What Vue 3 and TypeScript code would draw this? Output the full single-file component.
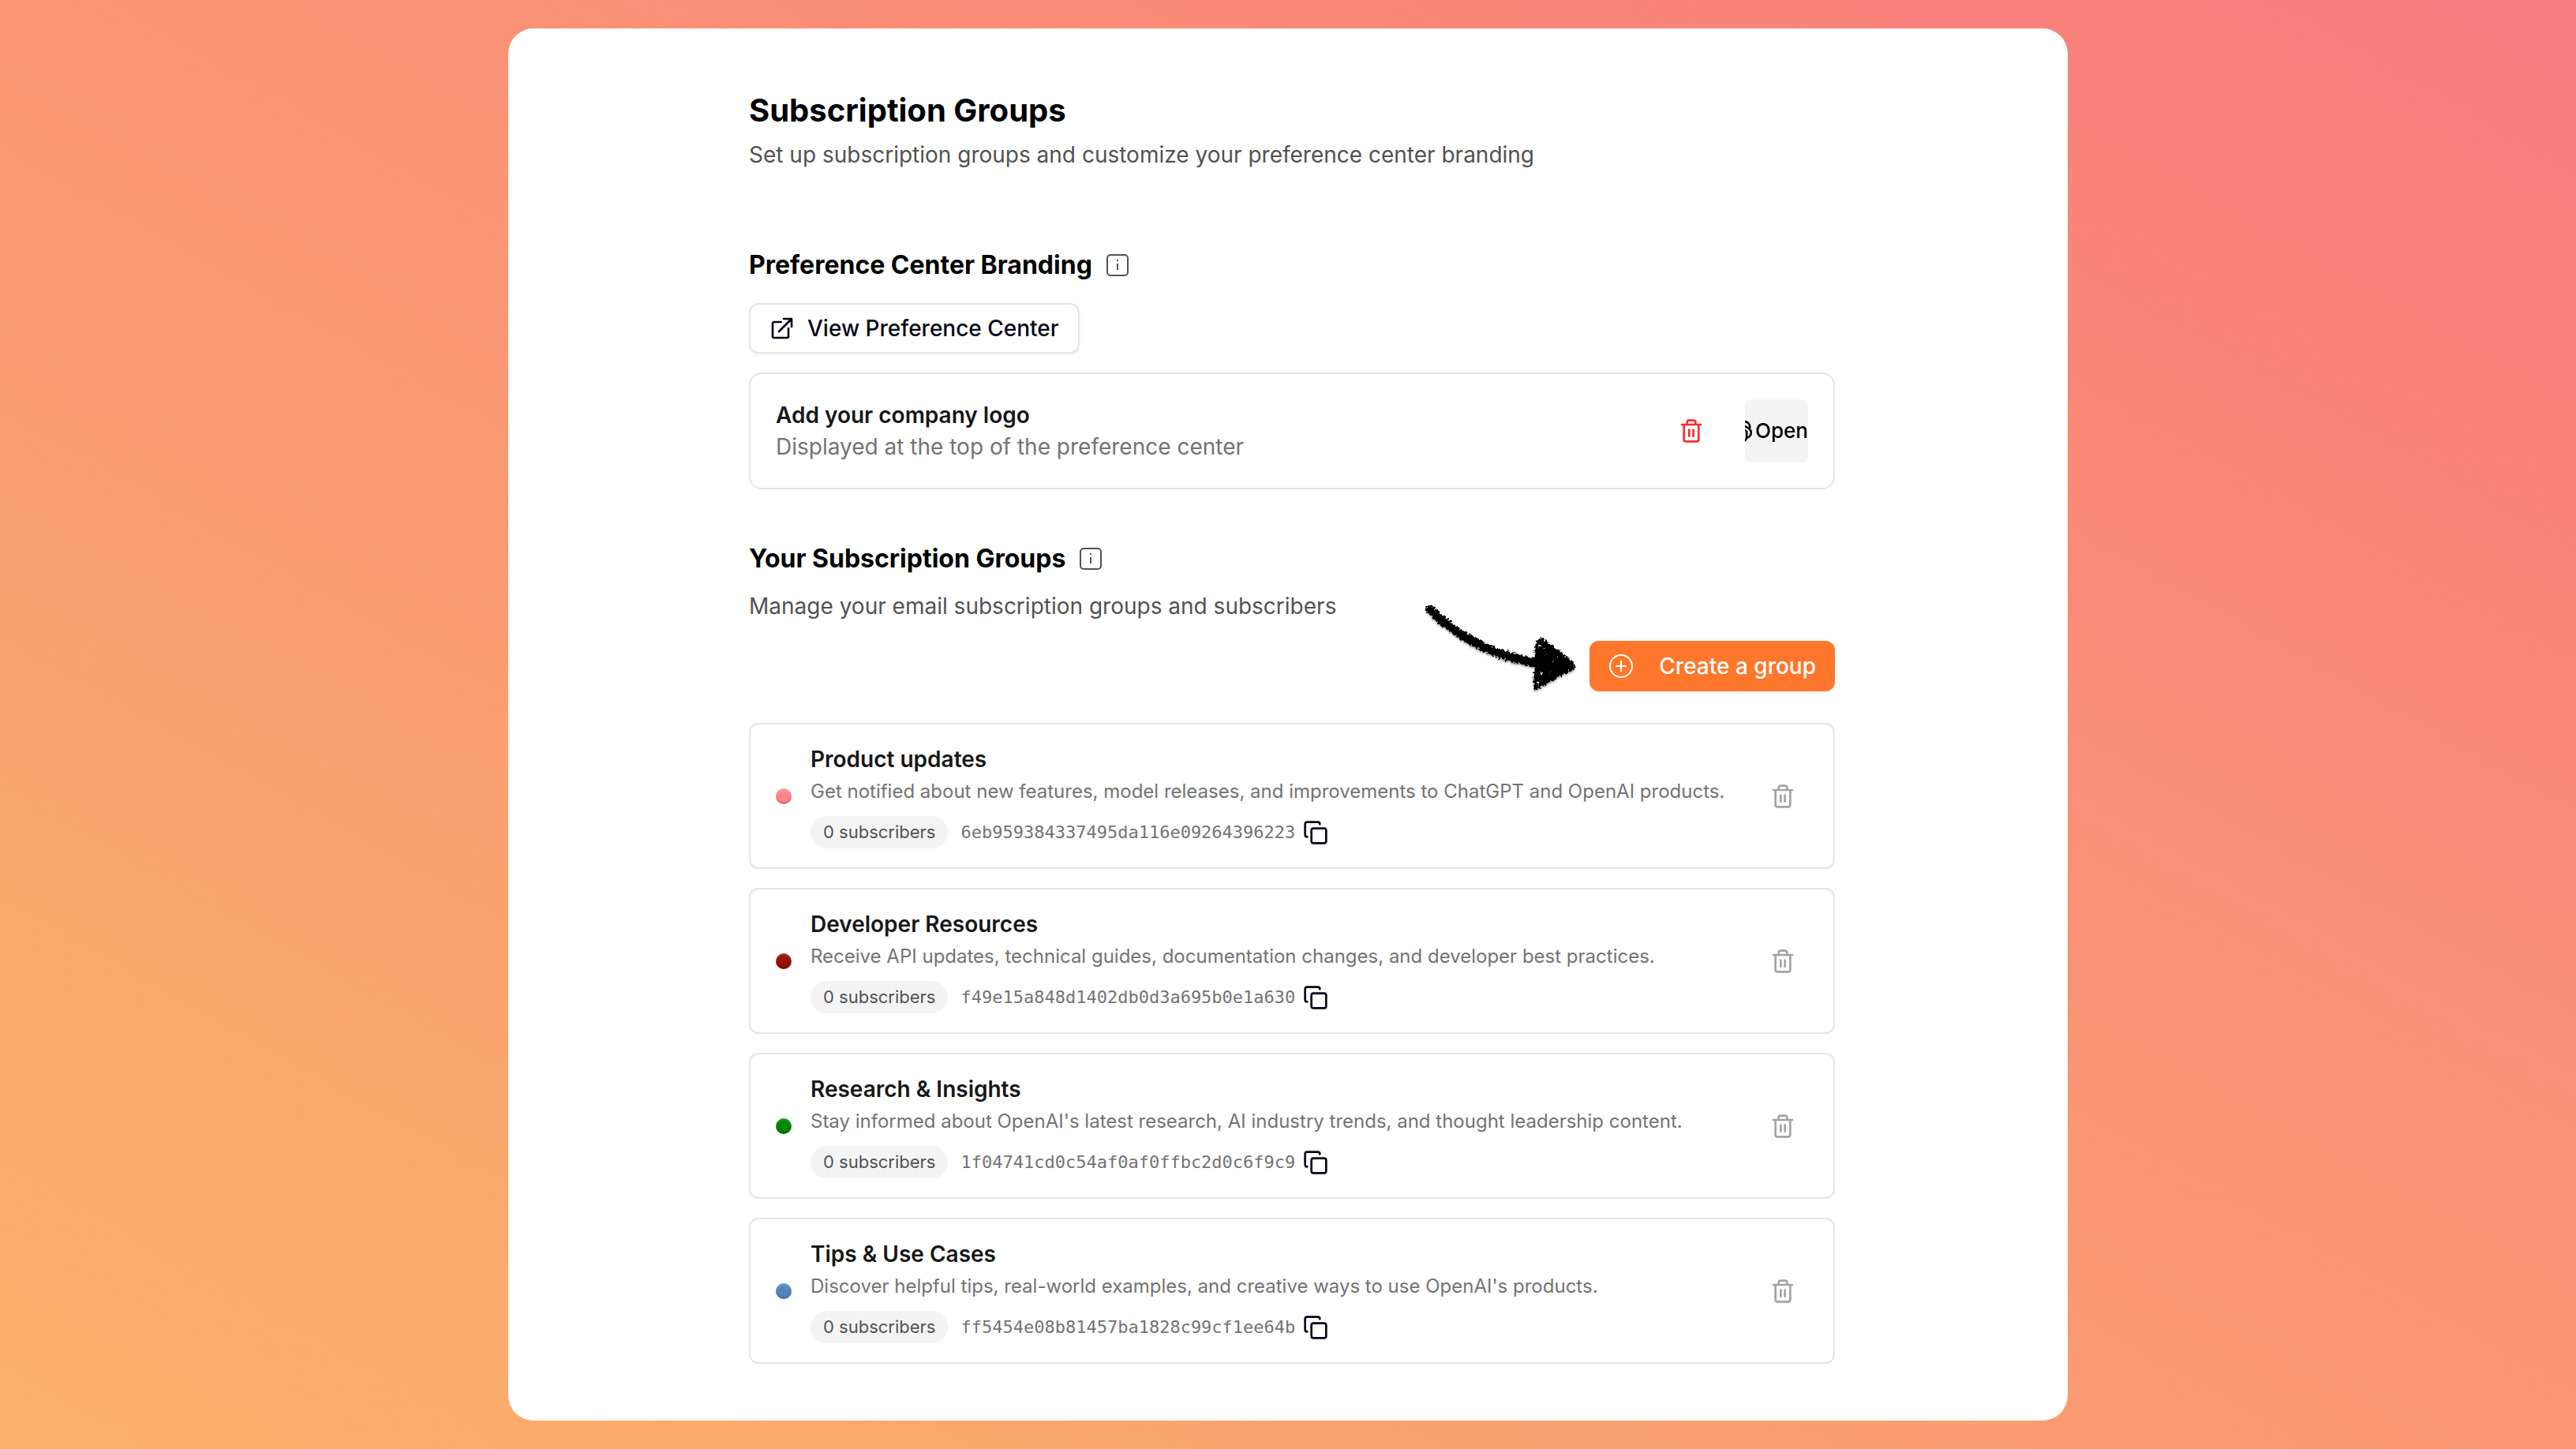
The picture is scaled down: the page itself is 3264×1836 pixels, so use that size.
<script setup lang="ts">
interface Group {
  name: string
  description: string
  subscribers: number
  id: string
  color: string
}

const groups: Group[] = [
  {
    name: 'Product updates',
    description:
      'Get notified about new features, model releases, and improvements to ChatGPT and OpenAI products.',
    subscribers: 0,
    id: '6eb959384337495da116e09264396223',
    color: '#ff858d',
  },
  {
    name: 'Developer Resources',
    description:
      'Receive API updates, technical guides, documentation changes, and developer best practices.',
    subscribers: 0,
    id: 'f49e15a848d1402db0d3a695b0e1a630',
    color: '#941100',
  },
  {
    name: 'Research & Insights',
    description:
      "Stay informed about OpenAI's latest research, AI industry trends, and thought leadership content.",
    subscribers: 0,
    id: '1f04741cd0c54af0af0ffbc2d0c6f9c9',
    color: '#008500',
  },
  {
    name: 'Tips & Use Cases',
    description:
      "Discover helpful tips, real-world examples, and creative ways to use OpenAI's products.",
    subscribers: 0,
    id: 'ff5454e08b81457ba1828c99cf1ee64b',
    color: '#5186be',
  },
]

const copyId = (id: string): void => {
  void navigator.clipboard?.writeText(id)
}
</script>

<template>
  <div class="page">
    <main class="panel">
      <header class="intro">
        <h1>Subscription Groups</h1>
        <p class="lead">Set up subscription groups and customize your preference center branding</p>
      </header>

      <section class="branding">
        <div class="heading">
          <h2>Preference Center Branding</h2>
          <svg class="info" viewBox="0 0 28 28" aria-hidden="true">
            <rect x="1" y="1" width="26" height="26" rx="4" />
            <path d="M14 12v8M14 7v2" />
          </svg>
        </div>
        <a class="view" href="#preference-center">
          <svg class="icon" viewBox="0 0 24 24" aria-hidden="true">
            <path d="M13.5 3H21v7.5M21 3 9 15M18 12v7.5a1.5 1.5 0 0 1-1.5 1.5h-12A1.500 1.500 0 0 1 3 19.500v-12A1.500 1.500 0 0 1 4.500 6H11" />
          </svg>
          View Preference Center
        </a>
        <div class="logo-card">
          <div class="logo-text">
            <h3>Add your company logo</h3>
            <p>Displayed at the top of the preference center</p>
          </div>
          <button class="delete danger" type="button" aria-label="Remove logo">
            <svg class="icon" viewBox="0 0 24 24" aria-hidden="true">
              <path d="M3 6h18M19 6v14a2 2 0 0 1-2 2H7a2 2 0 0 1-2-2V6M8 6V4a2 2 0 0 1 2-2h4a2 2 0 0 1 2 2v2M10 11v6M14 11v6" />
            </svg>
          </button>
          <div class="thumb">
            <svg viewBox="0 0 24 24" aria-hidden="true">
              <path d="M22.2819 9.8211a5.9847 5.9847 0 0 0-.5157-4.9108 6.0462 6.0462 0 0 0-6.5098-2.9A6.0651 6.0651 0 0 0 4.9807 4.1818a5.9847 5.9847 0 0 0-3.9977 2.9 6.0462 6.0462 0 0 0 .7427 7.0966 5.98 5.98 0 0 0 .511 4.9107 6.051 6.051 0 0 0 6.5146 2.9001A5.9847 5.9847 0 0 0 13.2599 24a6.0557 6.0557 0 0 0 5.7718-4.2058 5.9894 5.9894 0 0 0 3.9977-2.9001 6.0557 6.0557 0 0 0-.7475-7.0729zm-9.022 12.6081a4.4755 4.4755 0 0 1-2.8764-1.0408l.1419-.0804 4.7783-2.7582a.7948.7948 0 0 0 .3927-.6813v-6.7369l2.02 1.1686a.071.071 0 0 1 .038.052v5.5826a4.504 4.504 0 0 1-4.4945 4.4944zm-9.6607-4.1254a4.4708 4.4708 0 0 1-.5346-3.0137l.142.0852 4.783 2.7582a.7712.7712 0 0 0 .7806 0l5.8428-3.3685v2.3324a.0804.0804 0 0 1-.0332.0615L9.74 19.9502a4.4992 4.4992 0 0 1-6.1408-1.6464zM2.3408 7.8956a4.485 4.485 0 0 1 2.3655-1.9728V11.6a.7664.7664 0 0 0 .3879.6765l5.8144 3.3543-2.0201 1.1685a.0757.0757 0 0 1-.071 0l-4.8303-2.7865A4.504 4.504 0 0 1 2.3408 7.872zm16.5963 3.8558L13.1038 8.364 15.1192 7.2a.0757.0757 0 0 1 .071 0l4.8303 2.7913a4.4944 4.4944 0 0 1-.6765 8.1042v-5.6772a.79.79 0 0 0-.407-.667zm2.0107-3.0231l-.142-.0852-4.7735-2.7818a.7759.7759 0 0 0-.7854 0L9.409 9.2297V6.8974a.0662.0662 0 0 1 .0284-.0615l4.8303-2.7866a4.4992 4.4992 0 0 1 6.6802 4.66zM8.3065 12.863l-2.02-1.1638a.0804.0804 0 0 1-.038-.0567V6.0742a4.4992 4.4992 0 0 1 7.3757-3.4537l-.142.0805L8.704 5.459a.7948.7948 0 0 0-.3927.6813zm1.0976-2.3654l2.602-1.4998 2.6069 1.4998v2.9994l-2.5974 1.4997-2.6067-1.4997Z" />
            </svg>
            <span>Open</span>
          </div>
        </div>
      </section>

      <section class="groups">
        <div class="heading">
          <h2>Your Subscription Groups</h2>
          <svg class="info" viewBox="0 0 28 28" aria-hidden="true">
            <rect x="1" y="1" width="26" height="26" rx="4" />
            <path d="M14 12v8M14 7v2" />
          </svg>
        </div>
        <p class="lead manage">Manage your email subscription groups and subscribers</p>
        <div class="actions">
          <svg class="arrow" viewBox="0 0 200 120" aria-hidden="true">
            <defs>
              <filter id="chalk" x="-5%" y="-5%" width="110%" height="115%">
                <feTurbulence type="fractalNoise" baseFrequency="0.35" numOctaves="2" seed="4" result="noise" />
                <feDisplacementMap in="SourceGraphic" in2="noise" scale="8" xChannelSelector="R" yChannelSelector="G" result="rough" />
                <feDropShadow in="rough" dx="0" dy="2" stdDeviation="1" flood-color="#000" flood-opacity="0.35" />
              </filter>
            </defs>
            <g filter="url(#chalk)">
              <path class="shaft" d="M11 12C38 40 84 70 142 79" />
              <path class="head" d="M148 51 152 49 192 79 194 86 150 110 144 114 143 104 145 84 144 62Z" />
              <path class="fleck" d="M149 57l1 5M157 70l1 2M166 78l2-1M152 91l-1 4M163 93l2 1M175 84l1 1M148 103l1 4M156 60l1 1M172 72l1 1" />
            </g>
          </svg>
          <button class="create" type="button">
            <svg class="icon" viewBox="0 0 32 32" aria-hidden="true">
              <circle cx="16" cy="16" r="14" />
              <path d="M10 16h12M16 10v12" />
            </svg>
            Create a group
          </button>
        </div>

        <ul class="list">
          <li v-for="group in groups" :key="group.id" class="group">
            <span class="dot" :style="{ backgroundColor: group.color }"></span>
            <div class="body">
              <h3>{{ group.name }}</h3>
              <p class="description">{{ group.description }}</p>
              <div class="meta">
                <span class="badge">{{ group.subscribers }} subscribers</span>
                <code>{{ group.id }}</code>
                <button class="copy" type="button" aria-label="Copy group ID" @click="copyId(group.id)">
                  <svg class="icon" viewBox="0 0 24 24" aria-hidden="true">
                    <rect x="8" y="8" width="14" height="14" rx="2" />
                    <path d="M4 16c-1.100 0-2-.9-2-2V4c0-1.100.9-2 2-2h10c1.100 0 2 .9 2 2" />
                  </svg>
                </button>
              </div>
            </div>
            <button class="delete" type="button" aria-label="Delete group">
              <svg class="icon" viewBox="0 0 24 24" aria-hidden="true">
                <path d="M3 6h18M19 6v14a2 2 0 0 1-2 2H7a2 2 0 0 1-2-2V6M8 6V4a2 2 0 0 1 2-2h4a2 2 0 0 1 2 2v2M10 11v6M14 11v6" />
              </svg>
            </button>
          </li>
        </ul>
      </section>
    </main>
  </div>
</template>

<style>
body {
  margin: 0;
}
</style>

<style scoped>
* {
  box-sizing: border-box;
}

.page {
  display: flex;
  justify-content: center;
  align-items: flex-start;
  min-height: 100vh;
  padding: 36px;
  background: linear-gradient(to top right, #fab26a, #f87b7e);
  font-family: Inter, 'Liberation Sans', sans-serif;
  font-size: 28px;
  line-height: 40px;
  color: #000;
}

.panel {
  width: 100%;
  max-width: 1976px;
  padding: 80px 295px 72px 305px;
  border-radius: 32px;
  background: #fff;
}

h1,
h2,
h3,
p,
ul {
  margin: 0;
  padding: 0;
}

h1 {
  font-size: 40px;
  line-height: 48px;
  font-weight: 700;
}

h2 {
  font-size: 32px;
  font-weight: 700;
}

h3 {
  font-size: 28px;
  font-weight: 600;
  color: #171717;
}

.lead {
  color: #525252;
}

.intro .lead {
  margin-top: 12px;
}

.heading {
  display: flex;
  align-items: center;
  gap: 18px;
}

.info {
  width: 28px;
  height: 28px;
  fill: none;
  stroke: #525252;
  stroke-width: 2;
}

.icon {
  flex: none;
  width: 32px;
  height: 32px;
  fill: none;
  stroke: currentColor;
  stroke-width: 2;
  stroke-linecap: round;
  stroke-linejoin: round;
}

.branding {
  margin-top: 100px;
}

.view {
  display: inline-flex;
  align-items: center;
  gap: 16px;
  height: 64px;
  margin-top: 28px;
  padding: 0 24px;
  border: 2px solid #e5e5e5;
  border-radius: 12px;
  box-shadow: 0 2px 4px rgba(0, 0, 0, 0.05);
  color: #020617;
  font-weight: 500;
  text-decoration: none;
  vertical-align: top;
}

.logo-card {
  display: flex;
  align-items: center;
  margin-top: 24px;
  padding: 32px;
  border: 2px solid #e5e5e5;
  border-radius: 16px;
}

.logo-text {
  flex: 1;
}

.logo-text p {
  color: #737373;
}

button {
  padding: 0;
  border: 0;
  background: none;
  font: inherit;
  cursor: pointer;
}

.delete {
  display: flex;
  flex: none;
  justify-content: center;
  align-items: center;
  width: 64px;
  height: 64px;
  color: #a3a3a3;
}

.danger {
  margin-right: 36px;
  color: #fb2c36;
}

.thumb {
  display: flex;
  flex: none;
  justify-content: flex-end;
  align-items: center;
  gap: 4px;
  width: 80px;
  height: 80px;
  overflow: hidden;
  border-radius: 8px;
  background: #f4f4f4;
  font-size: 26px;
  font-weight: 500;
}

.thumb svg {
  flex: none;
  width: 30px;
  height: 30px;
  stroke: #000;
  stroke-width: 0.5;
}

.groups {
  margin-top: 68px;
}

.manage {
  margin-top: 20px;
}

.actions {
  display: flex;
  justify-content: flex-end;
  position: relative;
  margin-top: 24px;
}

.arrow {
  position: absolute;
  right: 324px;
  bottom: -4px;
  width: 200px;
  height: 120px;
}

.shaft {
  fill: none;
  stroke: #000;
  stroke-width: 11;
  stroke-linecap: round;
}

.head {
  fill: #000;
  stroke: #000;
  stroke-width: 2;
  stroke-linejoin: round;
}

.fleck {
  fill: none;
  stroke: #fff;
  stroke-width: 1;
}

.create {
  display: flex;
  align-items: center;
  gap: 32px;
  height: 64px;
  padding: 0 24px;
  border-radius: 12px;
  background: #ff772c;
  box-shadow: 0 2px 4px rgba(0, 0, 0, 0.05);
  color: #fff;
  font-weight: 500;
}

.list {
  display: grid;
  gap: 24px;
  margin-top: 40px;
  list-style: none;
}

.group {
  display: flex;
  align-items: center;
  gap: 24px;
  padding: 24px 32px;
  border: 2px solid #e5e5e5;
  border-radius: 12px;
}

.dot {
  flex: none;
  width: 20px;
  height: 20px;
  border-radius: 50%;
  box-shadow:
    inset 0 -2px 3px rgba(0, 0, 0, 0.2),
    inset 0 2px 3px rgba(255, 255, 255, 0.2);
}

.body {
  flex: 1;
}

.description {
  margin-top: 4px;
  font-size: 24px;
  line-height: 34px;
  color: #737373;
}

.meta {
  display: flex;
  align-items: center;
  margin-top: 14px;
  font-size: 22px;
  line-height: 33px;
}

.badge {
  margin-right: 16px;
  padding: 4px 16px;
  border-radius: 21px;
  background: #f4f4f4;
  color: #525252;
}

code {
  margin-right: 10px;
  font-family: 'DejaVu Sans Mono', monospace;
  font-size: 22px;
  color: #737373;
}

.copy {
  display: flex;
  color: #020617;
}
</style>
